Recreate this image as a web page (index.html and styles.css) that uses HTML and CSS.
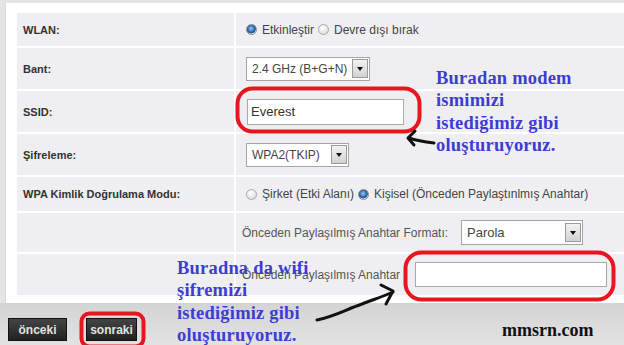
FILE: index.html
```html
<!DOCTYPE html>
<html lang="tr">
<head>
<meta charset="utf-8">
<title>WLAN</title>
<link rel="stylesheet" href="styles.css">
</head>
<body>
<div class="panel">
  <div class="table">
    <div class="lbl r1">WLAN:</div>
    <div class="val r1">
      <span class="radio on"></span><span class="rtxt">Etkinleştir</span>
      <span class="radio"></span><span class="rtxt">Devre dışı bırak</span>
    </div>

    <div class="lbl r2">Bant:</div>
    <div class="val r2">
      <div class="select sel-bant"><span class="stxt">2.4 GHz (B+G+N)</span><span class="arrow"></span></div>
    </div>

    <div class="lbl r3">SSID:</div>
    <div class="val r3">
      <div class="input in-ssid">Everest</div>
    </div>

    <div class="lbl r4">Şifreleme:</div>
    <div class="val r4">
      <div class="select sel-enc"><span class="stxt">WPA2(TKIP)</span><span class="arrow"></span></div>
    </div>

    <div class="lbl r5">WPA Kimlik Doğrulama Modu:</div>
    <div class="val r5">
      <span class="radio"></span><span class="rtxt">Şirket (Etki Alanı)</span>
      <span class="radio on"></span><span class="rtxt">Kişisel (Önceden Paylaştınlmış Anahtar)</span>
    </div>

    <div class="lbl r6"></div>
    <div class="val sub r6">
      <span class="sublbl w6">Önceden Paylaşılmış Anahtar Formatı:</span>
      <div class="select sel-fmt"><span class="stxt">Parola</span><span class="arrow"></span></div>
    </div>

    <div class="lbl r7"></div>
    <div class="val sub r7">
      <span class="sublbl w7">Önceden Paylaşılmış Anahtar</span>
      <div class="input in-key"></div>
    </div>
  </div>
</div>
<div class="footer">
  <button class="btn b-prev">önceki</button>
  <button class="btn b-next">sonraki</button>
</div>

<svg class="marks" width="624" height="345" viewBox="0 0 624 345">
  <rect x="237.5" y="88.5" width="182" height="43" rx="15" ry="15" fill="none" stroke="#e8161e" stroke-width="4"/>
  <rect x="405.5" y="252.5" width="208" height="47" rx="16" ry="16" fill="none" stroke="#e8161e" stroke-width="4"/>
  <rect x="81.5" y="313.5" width="62" height="33" rx="8" ry="8" fill="none" stroke="#e8161e" stroke-width="4"/>
  <path d="M434 143 C426 142 418 141 409 138" fill="none" stroke="#111" stroke-width="3" stroke-linecap="round"/>
  <path d="M415 131 L408 138 L414 145" fill="none" stroke="#111" stroke-width="3" stroke-linecap="round" stroke-linejoin="round"/>
  <path d="M317 320 C335 316 345 310 362 304 C375 299 384 296 393 292" fill="none" stroke="#111" stroke-width="3" stroke-linecap="round"/>
  <path d="M381 285 L393 291 L386 304" fill="none" stroke="#111" stroke-width="3" stroke-linecap="round" stroke-linejoin="round"/>
</svg>

<div class="note note1">Buradan modem<br>ismimizi<br>istediğimiz gibi<br>oluşturuyoruz.</div>
<div class="note note2">Buradna da wifi<br>şifremizi<br>istediğimiz gibi<br>oluşturuyoruz.</div>
<div class="brand">mmsrn.com</div>
</body>
</html>
```
FILE: styles.css
```css
html, body {
  margin: 0;
  padding: 0;
}
body {
  width: 624px;
  height: 345px;
  overflow: hidden;
  background: #e4e4e4;
  font-family: "Liberation Sans", Arial, sans-serif;
  font-size: 12px;
  color: #333;
  position: relative;
}
.panel {
  margin: 3px 0 0 5px;
  padding: 10px 0 8px 11px;
  background: #ffffff;
  border-left: 1px solid #d8d8d8;
  box-sizing: border-box;
  width: 619px;
}
.table {
  display: grid;
  grid-template-columns: 217px 1fr;
  grid-template-rows: 33px 41px 41px 41px 34px 39px 41px;
  gap: 2px;
}
.lbl, .val {
  background: #efeff2;
  display: flex;
  align-items: center;
}
.lbl {
  padding-left: 6px;
  font-weight: bold;
  font-size: 11px;
  color: #333;
}
.val {
  padding-left: 10px;
  color: #444;
}
.val.sub {
  padding-left: 6px;
}
.radio {
  width: 11px;
  height: 11px;
  border-radius: 50%;
  box-sizing: border-box;
  border: 1px solid #a9a9a9;
  background: radial-gradient(circle at 40% 35%, #ffffff 0%, #e6e6e6 60%, #cfcfcf 100%);
  flex: none;
}
.radio.on {
  background: radial-gradient(circle at 45% 40%, #9cc8f0 0%, #2f6fb8 45%, #1b4f8a 60%, #e0e0e0 70%, #cfcfcf 100%);
  border-color: #8a8a8a;
}
.rtxt {
  margin-left: 5px;
  margin-right: 4px;
}
.select {
  display: flex;
  align-items: center;
  justify-content: space-between;
  box-sizing: border-box;
  height: 24px;
  background: #fff;
  border: 1px solid #a5a5a5;
  padding: 0 1px 0 5px;
  color: #444;
  font-size: 12px;
}
.sel-bant { width: 124px; }
.sel-enc { width: 103px; }
.sel-fmt { width: 122px; height: 25px; margin-left: 8px; font-size: 13px; }
.arrow {
  width: 16px;
  height: 19px;
  box-sizing: border-box;
  border: 1px solid #9a9a9a;
  background: linear-gradient(#f2f2f2, #d2d2d2);
  position: relative;
  flex: none;
}
.arrow::after {
  content: "";
  position: absolute;
  left: 4px;
  top: 7px;
  border-left: 3px solid transparent;
  border-right: 3px solid transparent;
  border-top: 4px solid #111;
}
.input {
  box-sizing: border-box;
  height: 26px;
  background: #fff;
  border: 1px solid #a9a9a9;
  display: flex;
  align-items: center;
  padding-left: 3px;
  font-size: 13px;
  color: #333;
}
.in-ssid { width: 157px; margin-left: 1px; }
.in-key { width: 192px; height: 25px; margin-left: 0; }
.sublbl { color: #555; white-space: nowrap; }
.w6 { width: 211px; }
.w7 { width: 173px; }

.footer {
  height: 42px;
  box-sizing: border-box;
  padding: 15px 0 0 8px;
  background: linear-gradient(#d4d4d4, #e2e2e2);
  display: flex;
  align-items: flex-start;
  gap: 19px;
}
.btn {
  height: 23px;
  box-sizing: border-box;
  border: 1px solid #111;
  background: linear-gradient(#444, #222);
  color: #e2e2e2;
  font-family: "Liberation Sans", Arial, sans-serif;
  font-weight: bold;
  font-size: 12px;
  padding: 0;
  cursor: pointer;
}
.b-prev { width: 59px; }
.b-next { width: 51px; }

.marks {
  position: absolute;
  left: 0;
  top: 0;
  pointer-events: none;
}
.note {
  position: absolute;
  font-family: "Liberation Serif", "Times New Roman", serif;
  font-weight: bold;
  font-size: 18.5px;
  line-height: 22.3px;
  color: #3d3dd4;
  letter-spacing: 0.2px;
  white-space: nowrap;
}
.note1 { left: 436px; top: 67px; }
.note2 { left: 177px; top: 257px; }
.brand {
  position: absolute;
  left: 502px;
  top: 320px;
  font-family: "Liberation Serif", "Times New Roman", serif;
  font-weight: bold;
  font-size: 18px;
  color: #111;
}
```
